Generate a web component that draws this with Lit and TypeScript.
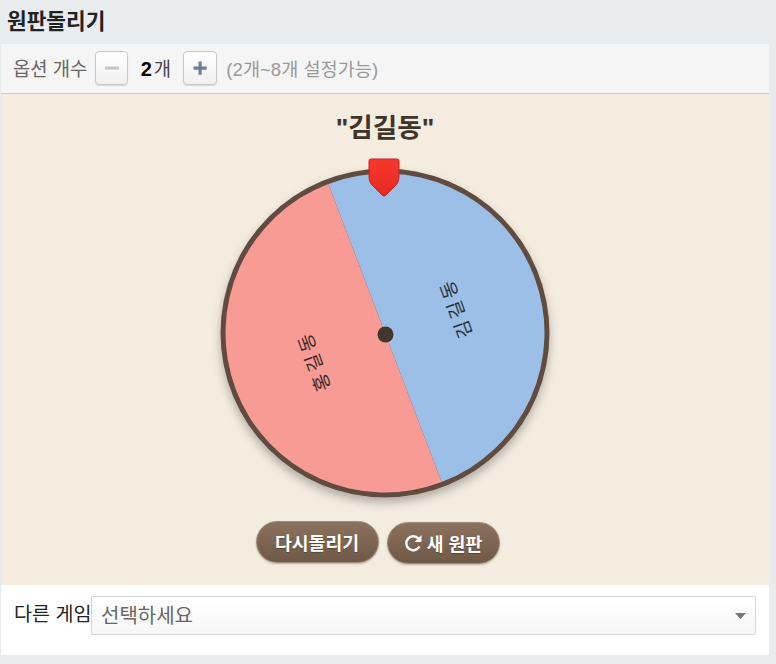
import { LitElement, html, css } from "lit";
import { customElement } from "lit/decorators.js";

@customElement("app-root")
export class AppRoot extends LitElement {
  static styles = css`
    :host { display: block; width: 776px; height: 664px; background: #e9ecef; overflow: hidden;
      font-family: "Liberation Sans", "Noto Sans CJK KR", sans-serif; color: #222; }
    .title { height: 44px; box-sizing: border-box; padding: 8px 0 0 7px; font-size: 21.4px; line-height: 28px; font-weight: 700; color: #222; }
    .card { margin-left: 1px; width: 768px; background: #fff; height: 611px; display: flex; flex-direction: column; }
    .bar { height: 50px; box-sizing: border-box; background: #f5f5f5; border-bottom: 1px solid #d5cdc5; display: flex; align-items: center; padding-left: 12px; padding-bottom: 2px; font-size: 18.8px; color: #666; }
    .step { width: 33px; height: 34px; box-sizing: border-box; border: 1px solid #c9c9c9; border-radius: 4px; background: linear-gradient(#fff, #f0f0f0); box-shadow: 0 1px 1px rgba(0,0,0,.12); display: flex; align-items: center; justify-content: center; margin-left: 8px; padding: 0; }
    .count { width: 55px; text-align: center; color: #444; white-space: nowrap; box-sizing: border-box; display: flex; justify-content: center; align-items: baseline; gap: 2px; }
    .count b { color: #000; font-size: 20px; }
    .step.plus { margin-left: 0; width: 34px; }
    .hint { color: #999; margin-left: 9px; font-size: 18.6px; }
    .stage { height: 491px; background: #f4ecdf; display: flex; flex-direction: column; align-items: center; }
    .who { margin-top: 16px; height: 36px; font-size: 26.6px; line-height: 36px; font-weight: 700; color: #3f352b; }
    .wheel { position: relative; width: 340px; height: 343px; margin-top: 22px; margin-left: -1px; }
    .wheel svg.disc { display: block; width: 340px; height: 343px; overflow: visible; }
    .pin { position: absolute; left: 153px; top: -10px; width: 32px; height: 40px; }
    .actions { display: flex; gap: 8px; margin-top: 10px; margin-right: 15px; align-items: flex-start; }
    .btn { height: 42px; box-sizing: border-box; border-radius: 21px; border: 1px solid #a08a78; background: linear-gradient(#8b725e, #6f5847); color: #fff; font: 700 18.3px "Liberation Sans", "Noto Sans CJK KR", sans-serif; display: flex; align-items: center; justify-content: center; gap: 3px; box-shadow: 0 1px 2px rgba(0,0,0,.25); text-shadow: 0 1px 1px rgba(0,0,0,.3); padding: 0; }
    .btn.again { width: 123px; }
    .btn.fresh { width: 113px; margin-top: 1px; }
    .foot { flex: 1; display: flex; align-items: flex-start; padding: 11px 13px 0 13px; font-size: 19.6px; color: #222; }
    .foot .lbl { line-height: 36px; white-space: nowrap; width: 77px; }
    .select { flex: 1; height: 39px; box-sizing: border-box; border: 1px solid #d6d6d6; border-radius: 2px; background: linear-gradient(#fff, #f7f7f7); display: flex; align-items: center; justify-content: space-between; padding: 0 9px 3px; color: #666; font-size: 20px; }
    .select svg { margin-top: 4px; }
  `;

  render() {
    const cx = 170, cy = 165;
    return html`
      <div class="title">원판돌리기</div>
      <div class="card">
        <div class="bar">
          <span>옵션 개수</span>
          <button class="step" aria-label="minus"><svg width="16" height="16" viewBox="0 0 16 16"><rect x="1" y="6.500" width="14" height="3.200" fill="#c4c7cc"/></svg></button>
          <span class="count"><b>2</b>개</span>
          <button class="step plus" aria-label="plus"><svg width="16" height="16" viewBox="0 0 16 16"><path d="M1.500 6.500h5v-5h3.200v5h5v3.200h-5v5h-3.200v-5h-5z" fill="#6b7f9b"/></svg></button>
          <span class="hint">(2개~8개 설정가능)</span>
        </div>
        <div class="stage">
          <div class="who">"김길동"</div>
          <div class="wheel">
            <svg class="disc" viewBox="0 0 340 343">
              <defs>
                <filter id="sh" x="-10%" y="-10%" width="120%" height="125%"><feDropShadow dx="0" dy="5" stdDeviation="5" flood-color="#000" flood-opacity=".28"/></filter>
              </defs>
              <circle cx="${cx}" cy="${cy}" r="164.500" fill="#5f4c3f" filter="url(#sh)"/>
              <g transform="rotate(-20.800 ${cx} ${cy})">
                <path d="M${cx} ${cy}V${cy - 159.5}A159.500 159.500 0 0 1 ${cx} ${cy + 159.5}Z" fill="#9cbfe7"/>
                <path d="M${cx} ${cy}V${cy + 159.5}A159.500 159.500 0 0 1 ${cx} ${cy - 159.5}Z" fill="#f89b94"/>
              </g>
              <text transform="translate(239 140.500) rotate(-110)" text-anchor="middle" dominant-baseline="central" font-size="19" letter-spacing="3.500" fill="#27303d" font-family="Noto Sans CJK KR">김길동</text>
              <text transform="translate(97 193.500) rotate(-110)" text-anchor="middle" dominant-baseline="central" font-size="19" letter-spacing="3.500" fill="#3a2a28" font-family="Noto Sans CJK KR">홍길동</text>
              <circle cx="${cx + .5}" cy="${cy + 1.5}" r="8" fill="#43362c"/>
            </svg>
            <svg class="pin" viewBox="0 0 32 40">
              <defs><linearGradient id="pg" x1="0" y1="0" x2="0" y2="1"><stop offset="0" stop-color="#f6382c"/><stop offset="1" stop-color="#e62a22"/></linearGradient></defs>
              <path d="M1 3a2 2 0 0 1 2-2h26a2 2 0 0 1 2 2v15c0 4-1 7-3 9l-10 10a2.500 2.500 0 0 1-4 0L4 27c-2-2-3-5-3-9z" fill="url(#pg)" stroke="#c8231c"/>
            </svg>
          </div>
          <div class="actions">
            <button class="btn again">다시돌리기</button>
            <button class="btn fresh"><svg width="20" height="20" viewBox="0 0 20 20"><path d="M15.500 13.500a7 7 0 1 1-1-8" fill="none" stroke="#fff" stroke-width="2.400"/><path d="M17.500 2v7h-7z" fill="#fff"/></svg>새 원판</button>
          </div>
        </div>
        <div class="foot">
          <span class="lbl">다른 게임</span>
          <div class="select"><span>선택하세요</span><svg width="11" height="6" viewBox="0 0 11 6"><path d="M0 0h11L5.500 6z" fill="#777"/></svg></div>
        </div>
      </div>
    `;
  }
}
